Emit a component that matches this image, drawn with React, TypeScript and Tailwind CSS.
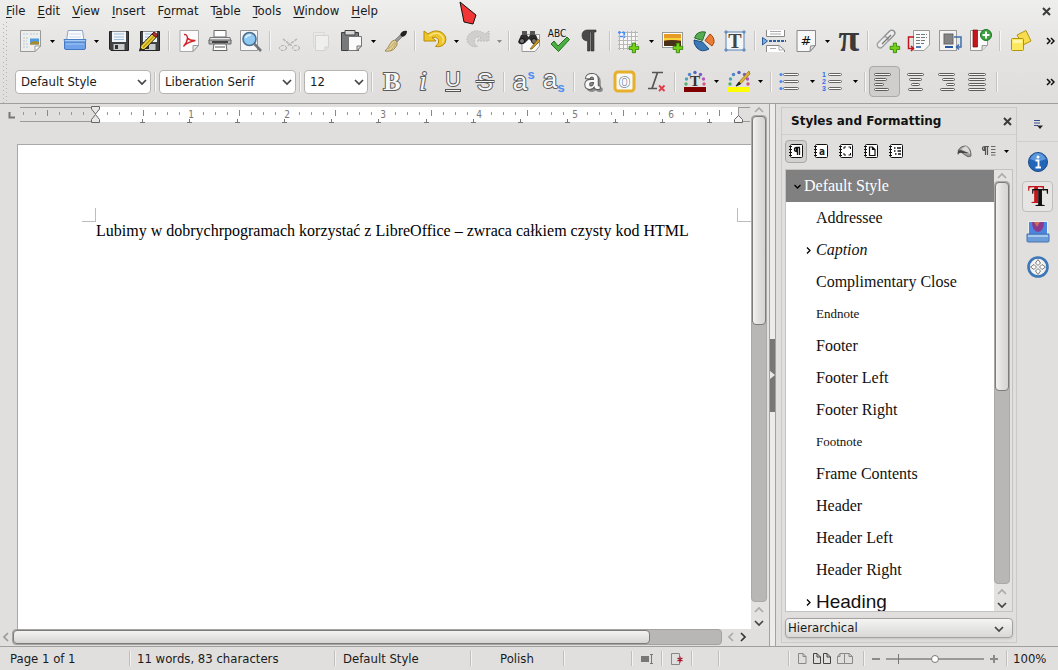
import { useState, type ReactNode } from 'react';
import clsx from 'clsx';

/* ---------- shared bits ---------- */

function Icon({ children, className }: { children: ReactNode; className?: string }) {
  return (
    <svg viewBox="0 0 24 24" className={clsx('h-6 w-6 shrink-0 overflow-visible', className)} fill="none" aria-hidden="true">
      {children}
    </svg>
  );
}

function Chevron({ dir, className = 'h-3 w-3' }: { dir: 'up' | 'down' | 'left' | 'right'; className?: string }) {
  const paths = {
    up: 'M2 8 L6 4 L10 8',
    down: 'M2 4 L6 8 L10 4',
    left: 'M8 2 L4 6 L8 10',
    right: 'M4 2 L8 6 L4 10',
  };
  return (
    <svg viewBox="0 0 12 12" className={className} fill="none" aria-hidden="true">
      <path d={paths[dir]} stroke="currentColor" strokeWidth="1.7" />
    </svg>
  );
}

function Sep() {
  return (
    <span className="flex w-2 shrink-0 justify-center">
      <span className="h-5 w-px bg-[#c6c5c4]" />
      <span className="h-5 w-px bg-[#f6f6f6]" />
    </span>
  );
}

interface ToolProps {
  label: string;
  icon: ReactNode;
  menu?: 'normal' | 'tight';
  disabled?: boolean;
  pressed?: boolean;
}

function Tool({ label, icon, menu, disabled, pressed }: ToolProps) {
  return (
    <>
      <button
        type="button"
        aria-label={label}
        aria-pressed={pressed}
        disabled={disabled}
        className={clsx(
          'flex h-[31px] w-[31px] shrink-0 items-center justify-center rounded-sm border',
          pressed ? 'border-[#aaa9a7] bg-[#cfcecd]' : 'border-transparent',
        )}
      >
        {icon}
      </button>
      {menu && (
        <button
          type="button"
          aria-label={`${label} options`}
          disabled={disabled}
          className={clsx(
            'flex h-[31px] shrink-0 items-center justify-center',
            menu === 'tight' ? 'w-3' : 'w-[13px]',
            disabled ? 'text-[#8a8a8a]' : 'text-black',
          )}
        >
          <svg viewBox="0 0 5 3" className="h-[3px] w-[5px]" aria-hidden="true">
            <path d="M0 0H5L2.5 3Z" fill="currentColor" />
          </svg>
        </button>
      )}
    </>
  );
}

function Overflow() {
  return (
    <button type="button" aria-label="More" className="ml-auto mr-[2px] flex h-6 w-3 shrink-0 items-center justify-center">
      <svg viewBox="0 0 9 8" className="h-2 w-[9px]" fill="none" aria-hidden="true">
        <path d="M1 1L4 4L1 7M5 1L8 4L5 7" stroke="#111" strokeWidth="1.5" />
      </svg>
    </button>
  );
}

function Combo({ label, value, className }: { label: string; value: string; className: string }) {
  return (
    <span className={clsx('relative shrink-0', className)}>
      <select
        aria-label={label}
        defaultValue={value}
        className="h-6 w-full appearance-none rounded border border-[#b5b4b2] bg-white px-[5px] text-[13px] leading-5 text-[#1a1a1a]"
      >
        <option>{value}</option>
      </select>
      <Chevron dir="down" className="pointer-events-none absolute right-[3px] top-[6px] h-3 w-3 text-[#444]" />
    </span>
  );
}

/* ---------- icons ---------- */

const plus = <path d="M16 12h4v4h4v4h-4v4h-4v-4h-4v-4h4z" fill="#73d216" stroke="#2f7d05" strokeWidth="1" transform="translate(4.5 4.5) scale(.8)" />;

const sheet = 'M3 1.5H21.5V16.5L16 22.5H3Z';

interface GlyphProps {
  ch: string;
  x?: number;
  y?: number;
  size?: number;
  family?: string;
  italic?: boolean;
  bold?: boolean;
}

// white letter with a grey outline, as on the character formatting buttons
function Glyph({ ch, x = 12, y = 20, size = 26, family = 'Liberation Serif', italic = false, bold = true }: GlyphProps) {
  return (
    <text
      x={x}
      y={y}
      fontSize={size}
      fontFamily={`"${family}", serif`}
      fontWeight={bold ? 700 : 400}
      fontStyle={italic ? 'italic' : 'normal'}
      textAnchor="middle"
      fill="#f8f8f8"
      stroke="#5a5a5a"
      strokeWidth="2"
      strokeLinejoin="round"
      paintOrder="stroke"
    >
      {ch}
    </text>
  );
}

const NewIcon = (
  <Icon>
    <path d="M1.5 1.5H21.5V17L16 22.5H1.5Z" fill="#eeeeec" stroke="#999" />
    <path d="M4 5H9M11 5H19M4 9H9M4 12H8M4 15H9M4 18H9" stroke="#b9c9d8" strokeDasharray="2 1" />
    <rect x="11" y="9.5" width="9" height="6" fill="#4f9be0" />
    <path d="M11 15.5V14L15 12L20 13V15.5Z" fill="#a98a2c" />
    <path d="M16 22.5V17H21.5Z" fill="#fff" stroke="#999" />
  </Icon>
);
const OpenIcon = (
  <Icon>
    <path d="M5 1.5H19.5L21 12H3.5Z" fill="#f8fbff" stroke="#8ea5c5" />
    <path d="M6 5H18M6 8H18" stroke="#cfdcec" />
    <path d="M1 10.5H23L22 14H2Z" fill="#a9cdf6" stroke="#4a80c9" />
    <path d="M1.5 13H22.5V19Q22.5 20.5 21 20.5H3Q1.5 20.5 1.5 19Z" fill="#6fa2e8" stroke="#4478c4" />
    <path d="M3 15H21" stroke="#a5c9f7" />
  </Icon>
);
const disk = (
  <>
    <path d="M2.5 2.5H21.5V21.5H4L2.5 20Z" fill="#3f4143" stroke="#222" />
    <rect x="5" y="2.5" width="14" height="10.5" fill="#f0f5fa" />
    <path d="M7 5H17M7 8H17M7 10.5H17" stroke="#9fbcd8" />
    <rect x="6.5" y="15" width="11" height="6" fill="#c9cccd" />
    <rect x="8" y="16" width="3" height="4" fill="#333" />
  </>
);
const SaveIcon = <Icon>{disk}</Icon>;
const SaveAsIcon = (
  <Icon>
    {disk}
    <path d="M1.5 22L3 16.5L15 4L19 7.5L7 20Z" fill="#edd43a" stroke="#222" />
    <path d="M5 18.5L17 6" stroke="#b59410" strokeWidth="1.2" />
    <path d="M14 5L16 3L20 6L18 8.5Z" fill="#a33" stroke="#5b1010" />
    <path d="M1.5 22L2.5 18.5L5 20.8Z" fill="#222" />
  </Icon>
);
const PdfIcon = (
  <Icon>
    <path d={sheet} fill="#fbfbfb" stroke="#aaa" />
    <path d="M7 5.5Q10 5 10.5 9Q13 12 18.5 11.5M10.5 9Q10 14 6.5 17.5M6.5 17Q12 12.5 18.5 11.5" stroke="#d2232a" strokeWidth="1.4" />
    <path d="M16 22.5V16.5H21.5Z" fill="#e8e8e8" stroke="#999" />
  </Icon>
);
const PrintIcon = (
  <Icon>
    <path d="M6 1.5H18V8H6Z" fill="#fff" stroke="#666" />
    <path d="M2 8.5H22L23 12H1Z" fill="#e8e8e8" stroke="#777" />
    <path d="M1 11H23V15H1Z" fill="#b5b5b5" stroke="#666" />
    <path d="M4 13H20" stroke="#222" strokeWidth="1.5" />
    <path d="M6 15H18L19 21.5H5Z" fill="#fff" stroke="#666" />
    <path d="M7 18H17" stroke="#555" />
  </Icon>
);
const PreviewIcon = (
  <Icon>
    <path d="M1.5 1.5H18.5V21.5H1.5Z" fill="#f7f7f7" stroke="#999" />
    <circle cx="10.5" cy="10" r="6.5" fill="#8fcaf5" stroke="#4f6f8d" strokeWidth="1.6" />
    <path d="M6.5 9Q8 5.5 12 6" stroke="#e4f4ff" strokeWidth="1.5" />
    <path d="M15.5 15L22 22" stroke="#707476" strokeWidth="2.6" />
  </Icon>
);
const CutIcon = (
  <Icon>
    <path d="M5 10L14 17M19 10L9 17" stroke="#b5b5b5" strokeWidth="1.5" strokeDasharray="3 1" />
    <ellipse cx="5" cy="19" rx="3.5" ry="2.5" stroke="#aaa" strokeDasharray="3 1" />
    <ellipse cx="18" cy="19" rx="3.5" ry="2.5" stroke="#aaa" strokeDasharray="3 1" />
  </Icon>
);
const CopyIcon = (
  <Icon>
    <path d="M4.5 3.5H15.5V17.5H4.5Z" fill="#e8e8e7" stroke="#dad9d8" />
    <path d="M6.5 6.5H19.5V18L16 21.5H6.5Z" fill="#efefee" stroke="#d3d2d1" />
    <path d="M16 21V18H19" stroke="#cecdcc" />
  </Icon>
);
const PasteIcon = (
  <Icon>
    <path d="M1.5 3.5H18.5V21.5H1.5Z" fill="#77797a" stroke="#3c3e3f" />
    <path d="M5 1.5H15V6H5Z" fill="#d8d8d8" stroke="#444" />
    <path d="M8.5 7.5H21.5V17L17 21.5H8.5Z" fill="#fafafa" stroke="#777" />
    <path d="M17 21.5V17H21.5Z" fill="#ddd" stroke="#777" />
  </Icon>
);
const BrushIcon = (
  <Icon>
    <path d="M23 2Q18 1 16 6L18 8Q23 7 23 2Z" fill="#222" />
    <path d="M16 6L11 11L13 13L18 8Z" fill="#999" stroke="#666" strokeWidth=".6" />
    <path d="M11 11Q8 11 6 15Q4 19 1 22Q8 23 11 19Q14 16 13 13Z" fill="#e3cf94" stroke="#8d7a44" strokeWidth=".8" />
    <path d="M4 20Q8 18 11 13M7 21Q10 19 12 14" stroke="#aa955a" strokeWidth=".7" />
  </Icon>
);
const undoPath = 'M1 2L5 5Q12 0 18 3Q25 7 22 14Q19 18.5 12.5 17.5Q17 14 15.5 10.5Q13 7 9 8.5L13 12H1Z';
const UndoIcon = (
  <Icon>
    <path d={undoPath} fill="#edc52b" stroke="#b98c07" strokeLinejoin="round" />
    <path d="M6 7Q13 2 18 6Q22 10 19 14" stroke="#fbe88b" strokeWidth="1.2" />
  </Icon>
);
const RedoIcon = (
  <Icon>
    <path d={undoPath} fill="#d0cfce" stroke="#bcbbba" strokeDasharray="2 1" transform="translate(24 0) scale(-1 1)" />
  </Icon>
);
const FindIcon = (
  <Icon>
    <path d="M5 5.5H22.5V17L18 22.5H5Z" fill="#f9f9f9" stroke="#999" />
    <path d="M5 2H10V6H5ZM13 2H18V6H13Z" fill="#555" />
    <path d="M4 6H10L11.5 8L13 6H19L22 13Q20 17 16 14L12 10L8 14Q3 17 1 13Z" fill="#2e2e2e" />
    <circle cx="5" cy="12" r="2.5" fill="#777" stroke="#111" />
    <circle cx="17" cy="12" r="2.5" fill="#777" stroke="#111" />
    <path d="M13 20L21 10L23 12L15 20Z" fill="#c59a2b" stroke="#7b5c10" strokeWidth=".7" />
  </Icon>
);
const SpellIcon = (
  <Icon>
    <text x="9" y="8" textAnchor="middle" fontSize="10" fontFamily='"DejaVu Sans Condensed", "DejaVu Sans", sans-serif' fill="#111">ABC</text>
    <path d="M3 15L6 12L10 17L19 8L21.5 10.5L10.5 22.5Z" fill="#4caf42" stroke="#23701d" />
  </Icon>
);
const PilcrowIcon = (
  <Icon>
    <path d="M17 1H8Q3 1.5 3 6.5Q3 11.5 8.500 12V22H11V3H12V22H15V3H17Z" fill="#4a4a4a" stroke="#2b2b2b" strokeWidth=".6" />
  </Icon>
);
const TableIcon = (
  <Icon>
    <path d="M1 3.5H19.5V20.5H1Z" fill="#f8f8f8" />
    <path d="M0 3.5H20M0 7.5H20M0 11.5H20M0 15.5H20M0 19.5H20M1.5 2V21M5.5 2V21M9.5 2V21M13.5 2V21M17.5 2V21" stroke="#b7b7b7" />
    <path d="M0 3.5H7M2 7.5H6M6.5 3.5V9M1.5 2V6" stroke="#4e8ef0" strokeWidth="1.3" strokeDasharray="3 1" />
    <g transform="translate(-3 0)">{plus}</g>
  </Icon>
);
const ImageIcon = (
  <Icon>
    <rect x=".5" y="3.5" width="20" height="15" fill="#fff" stroke="#999" />
    <rect x="2" y="5" width="17" height="12" fill="#e79a24" />
    <path d="M2 9H19V11H2Z" fill="#fbd23b" />
    <path d="M2 12Q9 10 19 12V17H2Z" fill="#4a3018" />
    <g transform="translate(-3 0)">{plus}</g>
  </Icon>
);
const ChartIcon = (
  <Icon>
    <path d="M9.5 11.5L1.5 9Q4 1.5 12.5 3Z" fill="#56ad51" stroke="#276d2a" />
    <path d="M12 11.5L17 5Q21.5 8 21 13.5L19 17Z" fill="#ec7b34" stroke="#9e4710" />
    <path d="M9.5 13L16 20Q9 24 4 19Q.5 15 1 11Z" fill="#3b78b5" stroke="#1f4c7d" />
  </Icon>
);
const TextBoxIcon = (
  <Icon>
    <rect x="2" y="3" width="18" height="18" fill="#f5f5f5" stroke="#5484b8" />
    <path d="M0 3H4M2 1V5M18 3H22M20 1V5M0 21H4M2 19V23M18 21H22M20 19V23" stroke="#5484b8" />
    <text x="11" y="19" textAnchor="middle" fontSize="20" fontWeight="700" fontFamily='"Liberation Serif", serif' fill="#444">T</text>
  </Icon>
);
const BreakIcon = (
  <Icon>
    <path d="M3.5 1V7.5H21.5V1" fill="#fff" stroke="#888" />
    <path d="M7 2.5H18M7 5H18" stroke="#aaa" />
    <path d="M-.5 8.5V16L4.5 12Z" fill="#79aee3" stroke="#2f5f96" />
    <path d="M6 12H23" stroke="#2b62a3" strokeWidth="2" strokeDasharray="3 1" />
    <path d="M3.5 23V16.5H16L21.5 21V23" fill="#fff" stroke="#888" />
    <path d="M7 19.5H13M16 17V21H21" stroke="#aaa" />
  </Icon>
);
const FieldIcon = (
  <Icon>
    <path d={sheet} fill="#f8f8f8" stroke="#888" />
    <text x="12" y="16" textAnchor="middle" fontSize="13" fontFamily='"DejaVu Sans", sans-serif' fill="#111">#</text>
    <path d="M16 22.5L16.5 17L21.5 16.5Z" fill="#ddd" stroke="#888" />
  </Icon>
);
const PiIcon = (
  <Icon>
    <text x="12" y="22" textAnchor="middle" fontSize="38" fontWeight="700" fontFamily='"Liberation Serif", serif' fill="#3a3a3a">π</text>
  </Icon>
);
const LinkIcon = (
  <Icon>
    <rect x="10" y="0" width="6" height="13" rx="3" transform="rotate(45 13 7)" stroke="#8a8d8f" strokeWidth="1.3" fill="#eee" />
    <rect x="4" y="7" width="6" height="13" rx="3" transform="rotate(45 7 13)" stroke="#9da0a2" strokeWidth="1.3" fill="#eee" />
    <path d="M6 15L15 6" stroke="#777" strokeWidth="1.3" />
    {plus}
  </Icon>
);
const XrefIcon = (
  <Icon>
    <path d="M6.5 1.5H22.5V16L17 21.5H6.5Z" fill="#fafafa" stroke="#999" />
    <path d="M9 5.5H20M9 8.5H20M9 11.5H19M9 14.5H17" stroke="#777" strokeDasharray="4 1" />
    <path d="M9 18H14" stroke="#2d5c9e" strokeWidth="1.6" />
    <path d="M7 8H1.5V19.5H6M4 17L6.5 19.5L4 22" stroke="#c3161c" strokeWidth="1.5" />
  </Icon>
);
const CaptionIcon = (
  <Icon>
    <rect x="1.5" y="1.5" width="17" height="20" fill="#f3f3f3" stroke="#999" />
    <rect x="6" y="5" width="9" height="10" fill="#858585" stroke="#666" />
    <path d="M7 18H15" stroke="#2556a0" strokeWidth="2" />
    <path d="M16 8H23V18H19M21 15.5L18.5 18L21 20.5" stroke="#3c6fae" strokeWidth="1.5" />
  </Icon>
);
const BookmarkIcon = (
  <Icon>
    <path d="M1.5 1.5H18.5V16L13 21.5H1.5Z" fill="#fafafa" stroke="#999" />
    <path d="M4 1H8.5V18H4Z" fill="#c4161c" stroke="#7c0b10" strokeWidth=".7" />
    <path d="M13 21.5V16.5H18" fill="#ddd" stroke="#999" />
    <circle cx="17" cy="6" r="5.5" fill="#3aa53f" stroke="#1f7424" />
    <path d="M17 2.5V9.5M13.5 6H20.5" stroke="#fff" strokeWidth="2" />
  </Icon>
);
const ShapesIcon = (
  <Icon>
    <path d="M9 6L18 1.5L23 12L15 16Z" fill="#f6dc4e" stroke="#b3940f" />
    <rect x="3.5" y="9.5" width="12" height="12" rx="1" fill="#fbe85e" stroke="#b3940f" />
    <path d="M5 11H14V14H5Z" fill="#fff6a8" />
  </Icon>
);

const StrikeIcon = (
  <Icon>
    <Glyph ch="S" size={24} family="Liberation Sans" bold={false} />
    <rect x="3" y="10.5" width="18" height="2" fill="#f4f4f4" stroke="#555" />
  </Icon>
);
const UnderlineIcon = (
  <Icon>
    <Glyph ch="U" x={11} size={21} y={16} family="Liberation Sans" bold={false} />
    <rect x="3.5" y="19.5" width="15" height="2" fill="#f4f4f4" stroke="#555" />
  </Icon>
);
const SuperIcon = (
  <Icon>
    <Glyph ch="a" x={8} size={26} family="Liberation Sans" bold={false} />
    <text x="19" y="9" textAnchor="middle" fontSize="13" fontWeight="700" fontFamily='"Liberation Sans", sans-serif' fill="#4b8df2">s</text>
  </Icon>
);
const SubIcon = (
  <Icon>
    <Glyph ch="a" x={7} y={18} size={26} family="Liberation Sans" bold={false} />
    <text x="18" y="22" textAnchor="middle" fontSize="13" fontWeight="700" fontFamily='"Liberation Sans", sans-serif' fill="#4b8df2">s</text>
  </Icon>
);
const ShadowIcon = (
  <Icon className="drop-shadow-[2px_2px_0_#8a8a8a]">
    <Glyph ch="a" x={10} y={19} size={27} family="Liberation Sans" />
  </Icon>
);
const OutlineIcon = (
  <Icon>
    <rect x="2" y="2" width="19" height="19" rx="3" fill="#f8f8f8" stroke="#e6b02a" strokeWidth="3" />
    <text x="11.5" y="17" textAnchor="middle" fontSize="22" fontFamily='"Liberation Serif", serif' fill="#fff" stroke="#789" strokeWidth="1.4" paintOrder="stroke">o</text>
  </Icon>
);
const ClearIcon = (
  <Icon>
    <path d="M8 2.5H19M13.5 2.5L8 18.5M4 18.5H13" stroke="#555" strokeWidth="1.7" />
    <path d="M15 15.5L20.5 21M20.5 15.5L15 21" stroke="#e23a46" strokeWidth="1.8" />
  </Icon>
);
const dots = (
  <>
    <circle cx="3" cy="14" r="1.7" fill="#55b06d" />
    <circle cx="3.5" cy="9" r="1.7" fill="#4ba3b8" />
    <circle cx="6.5" cy="4.5" r="1.7" fill="#4a86c8" />
    <circle cx="12" cy="2.5" r="1.7" fill="#5165c0" />
    <circle cx="17.5" cy="4.5" r="1.7" fill="#7f58c0" />
    <circle cx="20.5" cy="9" r="1.7" fill="#b456b8" />
    <circle cx="21" cy="14" r="1.7" fill="#cf5a83" />
  </>
);
const FontColorIcon = (
  <Icon>
    {dots}
    <text x="12" y="16" textAnchor="middle" fontSize="15" fontWeight="700" fontFamily='"Liberation Serif", serif' fill="#333">T</text>
    <rect x="1" y="17" width="22" height="5" fill="#800000" />
  </Icon>
);
const HighlightIcon = (
  <Icon>
    {dots}
    <path d="M22 1L12 12L13.5 14L23 4Z" fill="#dfb634" stroke="#8b6d10" strokeWidth=".7" />
    <path d="M12 12L9 16L13.5 14Z" fill="#222" stroke="#222" />
    <rect x="1" y="17" width="22" height="5" fill="#ffff00" />
  </Icon>
);
const BulletIcon = (
  <Icon>
    {[4, 11, 18].map((y) => (
      <g key={y}>
        <circle cx="2" cy={y + 0.5} r="1.6" fill="#4b8af0" />
        <rect x="4.5" y={y - 0.5} width="15" height="2" rx="1" fill="#fff" stroke="#666" />
      </g>
    ))}
  </Icon>
);
const NumberIcon = (
  <Icon>
    {[4, 11, 18].map((y, i) => (
      <g key={y}>
        <text x="2" y={y + 3} textAnchor="middle" fontSize="7" fontWeight="700" fontFamily='"Liberation Sans", sans-serif' fill="#2f6fe4">
          {i + 1}
        </text>
        <rect x="6.5" y={y - 0.5} width="13" height="2" rx="1" fill="#fff" stroke="#666" />
      </g>
    ))}
  </Icon>
);

function AlignIcon({ rows }: { rows: [number, number][] }) {
  return (
    <Icon>
      {rows.map(([x, w], i) => (
        <rect key={i} x={x - 1.5} y={3.5 + i * 5} width={w} height="2" rx="1" fill="#f4f4f4" stroke="#5c5c5c" />
      ))}
    </Icon>
  );
}

const alignments: { label: string; rows: [number, number][] }[] = [
  { label: 'Align Left', rows: [[3, 16], [3, 12], [3, 9], [3, 14]] },
  { label: 'Center', rows: [[5, 16], [7, 12], [9, 8], [6, 14]] },
  { label: 'Align Right', rows: [[5, 16], [9, 12], [13, 8], [7, 14]] },
  { label: 'Justified', rows: [[4, 17], [4, 17], [4, 17], [4, 17]] },
];

/* ---------- menu and toolbars ---------- */

// [before, accelerator, after]
const menus = [
  ['', 'F', 'ile'],
  ['', 'E', 'dit'],
  ['', 'V', 'iew'],
  ['', 'I', 'nsert'],
  ['F', 'o', 'rmat'],
  ['T', 'a', 'ble'],
  ['', 'T', 'ools'],
  ['', 'W', 'indow'],
  ['', 'H', 'elp'],
];

function CloseX() {
  return (
    <svg viewBox="0 0 9 9" className="h-[9px] w-[9px]" fill="none" aria-hidden="true">
      <path d="M1 1L8 8M8 1L1 8" stroke="#3b3b3b" strokeWidth="2" />
    </svg>
  );
}

function MenuBar() {
  return (
    <nav className="flex h-[22px] shrink-0 items-center">
      {menus.map(([before, key, after]) => (
        <button key={key + after} type="button" className="px-[6px] text-[13px] leading-5">
          {before}
          <span className="underline underline-offset-2">{key}</span>
          {after}
        </button>
      ))}
      <button type="button" aria-label="Close document" className="ml-auto mr-[6px] p-px">
        <CloseX />
      </button>
    </nav>
  );
}

// dotted drag handle at the left end of a toolbar
function Grip() {
  return (
    <svg className="ml-[3px] mr-[7px] h-full w-[5px] shrink-0" aria-hidden="true">
      {Array.from({ length: 11 }, (_, i) => (
        <g key={i} fill="#b3b2b0">
          <rect x="0" y={i * 4 + 2} width="1" height="1" />
          <rect x="3" y={i * 4} width="1" height="1" />
        </g>
      ))}
    </svg>
  );
}

function StandardBar() {
  return (
    <div role="toolbar" aria-label="Standard" className="flex h-[38px] shrink-0 items-center">
      <Grip />
      <Tool label="New" icon={NewIcon} menu="normal" />
      <Tool label="Open" icon={OpenIcon} menu="normal" />
      <Tool label="Save" icon={SaveIcon} />
      <Tool label="Save As" icon={SaveAsIcon} />
      <Sep />
      <Tool label="Export as PDF" icon={PdfIcon} />
      <Tool label="Print" icon={PrintIcon} />
      <Tool label="Print Preview" icon={PreviewIcon} />
      <Sep />
      <Tool label="Cut" icon={CutIcon} disabled />
      <Tool label="Copy" icon={CopyIcon} disabled />
      <Tool label="Paste" icon={PasteIcon} menu="normal" />
      <Tool label="Clone Formatting" icon={BrushIcon} />
      <Sep />
      <Tool label="Undo" icon={UndoIcon} menu="tight" />
      <Tool label="Redo" icon={RedoIcon} menu="tight" disabled />
      <Sep />
      <Tool label="Find and Replace" icon={FindIcon} />
      <Tool label="Spelling" icon={SpellIcon} />
      <Tool label="Formatting Marks" icon={PilcrowIcon} />
      <Sep />
      <Tool label="Table" icon={TableIcon} menu="normal" />
      <Tool label="Image" icon={ImageIcon} />
      <Tool label="Chart" icon={ChartIcon} />
      <Tool label="Text Box" icon={TextBoxIcon} />
      <Sep />
      <Tool label="Page Break" icon={BreakIcon} />
      <Tool label="Field" icon={FieldIcon} menu="tight" />
      <Tool label="Special Character" icon={PiIcon} />
      <Sep />
      <Tool label="Hyperlink" icon={LinkIcon} />
      <Tool label="Cross-reference" icon={XrefIcon} />
      <Tool label="Caption" icon={CaptionIcon} />
      <Tool label="Bookmark" icon={BookmarkIcon} />
      <Sep />
      <Tool label="Shapes" icon={ShapesIcon} />
      <Overflow />
    </div>
  );
}

function FormattingBar() {
  const [align, setAlign] = useState('Align Left');
  return (
    <div role="toolbar" aria-label="Formatting" className="flex h-[43px] shrink-0 items-center">
      <Grip />
      <Combo label="Paragraph style" value="Default Style" className="w-[136px]" />
      <Sep />
      <Combo label="Font name" value="Liberation Serif" className="w-[137px]" />
      <Sep />
      <Combo label="Font size" value="12" className="w-16" />
      <Sep />
      <Tool label="Bold" icon={<Icon><Glyph ch="B" /></Icon>} />
      <Tool label="Italic" icon={<Icon><Glyph ch="i" italic bold={false} size={28} /></Icon>} />
      <Tool label="Underline" icon={UnderlineIcon} />
      <Tool label="Strikethrough" icon={StrikeIcon} />
      <Sep />
      <Tool label="Superscript" icon={SuperIcon} />
      <Tool label="Subscript" icon={SubIcon} />
      <Sep />
      <Tool label="Shadow" icon={ShadowIcon} />
      <Tool label="Outline" icon={OutlineIcon} />
      <Tool label="Clear Formatting" icon={ClearIcon} />
      <Sep />
      <Tool label="Font Color" icon={FontColorIcon} menu="normal" />
      <Tool label="Highlighting" icon={HighlightIcon} menu="normal" />
      <Sep />
      <Tool label="Bullets" icon={BulletIcon} menu="tight" />
      <Tool label="Numbering" icon={NumberIcon} menu="tight" />
      <Sep />
      {alignments.map((a) => (
        <span key={a.label} className="contents" onClick={() => setAlign(a.label)}>
          <Tool label={a.label} icon={<AlignIcon rows={a.rows} />} pressed={align === a.label} />
        </span>
      ))}
      <Sep />
      <Overflow />
    </div>
  );
}

/* ---------- document ---------- */

function Ruler() {
  const ticks = Array.from({ length: 60 }, (_, i) => i - 6).filter((i) => i !== 0 && 96 + i * 12 < 748);
  return (
    <svg className="h-[22px] w-full shrink-0" fill="none" aria-hidden="true">
      <path d="M9.5 8V13.5H15" stroke="#777" strokeWidth="2" />
      <path d="M20 3.5H96M20 17.5H96" stroke="#9b9a99" />
      <rect x="96" y="3" width="642" height="15" fill="#fff" />
      {ticks.map((i) => {
        const x = 95.5 + i * 12;
        if (i > 0 && i % 8 === 0) {
          return (
            <text key={i} x={x - 0.5} y="14" textAnchor="middle" fontSize="10" fontFamily='"DejaVu Sans Condensed", "DejaVu Sans", sans-serif' fill="#777">
              {i / 8}
            </text>
          );
        }
        return i % 4 === 0 ? (
          <path key={i} d={`M${x} 6V12`} stroke="#888" />
        ) : (
          <path key={i} d={`M${x} 8V11`} stroke="#999" />
        );
      })}
      {Array.from({ length: 13 }, (_, i) => Math.round(142 + i * 47.25)).map((x) => (
        <path key={x} d={`M${x - 2} 18.5H${x + 3}M${x + 0.5} 15V18`} stroke="#777" />
      ))}
      <path d="M91.5 2.5H99.5V5L95.5 10L91.5 5ZM91.5 18.5H99.5V15.5L95.5 10.5L91.5 15.5Z" fill="#e8e8e8" stroke="#666" />
      <path d="M738.5 3V18M738 3.5H750M738 17.5H750" stroke="#9b9a99" />
      <path d="M734.5 18.5H742.5V15.5L738.5 11.5L734.5 15.5Z" fill="#f4f4f4" stroke="#666" />
    </svg>
  );
}

function VScroll({ thumb }: { thumb: string }) {
  return (
    <div className="flex w-[18px] shrink-0 flex-col bg-[#e3e2e1]">
      <button type="button" aria-label="Scroll up" className="flex h-[11px] w-4 items-center justify-center text-[#aaa]">
        <Chevron dir="up" />
      </button>
      <div className="min-h-0 w-4 flex-1 rounded border border-[#aaa9a7] bg-[#b8b7b5]">
        <div
          className={clsx(
            'w-full rounded border border-[#7d7c7a] bg-gradient-to-r from-[#f1f1f0] via-[#e0dfde] to-[#d5d4d3]',
            thumb,
          )}
        />
      </div>
      <button type="button" aria-label="Page up" className="mt-[2px] flex h-3 w-4 items-center justify-center text-[#aaa]">
        <Chevron dir="up" />
      </button>
      <button type="button" aria-label="Scroll down" className="flex h-[13px] w-4 items-center justify-center text-[#444]">
        <Chevron dir="down" />
      </button>
    </div>
  );
}

function HScroll() {
  return (
    <div className="flex h-[17px] shrink-0 items-start">
      <button type="button" aria-label="Scroll left" className="flex h-4 w-3 items-center text-[#999]">
        <Chevron dir="left" />
      </button>
      <div className="h-4 flex-1 rounded border border-[#a3a2a0] bg-[#b8b7b5]">
        <div className="h-[14px] w-[90%] rounded border border-[#7d7c7a] bg-gradient-to-b from-[#f3f3f2] to-[#d6d5d4]" />
      </div>
      <button type="button" aria-label="Page left" className="ml-[3px] flex h-4 w-3 items-center text-[#aaa]">
        <Chevron dir="left" />
      </button>
      <button type="button" aria-label="Scroll right" className="mr-5 flex h-4 w-3 items-center text-[#333]">
        <Chevron dir="right" />
      </button>
    </div>
  );
}

function Document() {
  return (
    <div className="flex min-w-0 flex-1 flex-col">
      <div className="flex min-h-0 flex-1">
        <div className="flex min-w-0 flex-1 flex-col">
          <Ruler />
          <div className="mt-[18px] flex min-h-0 flex-1 pl-[17px]">
            <div className="flex-1 border-l border-t border-[#a9a8a7] bg-white pt-[63px]">
              <div className="flex justify-between pl-[64px]">
                <span className="h-[14px] w-[14px] border-b border-r border-[#bdbdbd]" />
                <span className="h-[14px] w-[14px] border-b border-l border-[#bdbdbd]" />
              </div>
              <p className="whitespace-nowrap pl-[78px] font-['Liberation_Serif',serif] text-base leading-[18px] text-black">
                Lubimy w dobrychrpogramach korzystać z LibreOffice – zwraca całkiem czysty kod HTML
              </p>
            </div>
          </div>
        </div>
        <VScroll thumb="h-[43%]" />
      </div>
      <HScroll />
    </div>
  );
}

/* ---------- sidebar ---------- */

function Book({ children }: { children: ReactNode }) {
  return (
    <svg viewBox="0 0 16 16" className="h-4 w-4 overflow-visible" fill="none" aria-hidden="true">
      <rect x="2.5" y="1.5" width="12" height="13" rx="1" fill="#fff" stroke="#111" />
      <path d="M1 3.5H4M1 6.5H4M1 9.5H4M1 12.5H4" stroke="#111" />
      {children}
    </svg>
  );
}

const styleKinds = [
  { label: 'Paragraph Styles', art: <path d="M12 4.5H8.5Q6.5 4.5 6.5 6.5T9 8.5M9.5 4.5V12M11.5 4.5V12M8.5 5V8" stroke="#111" strokeWidth="1.3" /> },
  { label: 'Character Styles', art: <text x="9" y="12" textAnchor="middle" fontSize="10" fontWeight="700" fontFamily='"DejaVu Sans Condensed", "DejaVu Sans", sans-serif' fill="#222">a</text> },
  { label: 'Frame Styles', art: <path d="M6 6V4H8M10.5 4H12.5V6M12.5 10V12H10.5M8 12H6V10" stroke="#111" /> },
  { label: 'Page Styles', art: <path d="M6.5 4H9.5L12 6.5V12.5H6.5ZM9.5 4V6.5H12" stroke="#111" strokeWidth="1.2" /> },
  { label: 'List Styles', art: <path d="M6 5H7.5M9 5H13M6 8H7.5M9.5 8H13M7 11H8.5M10 11H13" stroke="#111" strokeWidth="1.3" /> },
];

interface StyleRow {
  name: string;
  look?: string;
  children?: boolean;
}

const styles: StyleRow[] = [
  { name: 'Addressee' },
  { name: 'Caption', look: 'italic', children: true },
  { name: 'Complimentary Close' },
  { name: 'Endnote', look: 'text-[13px]' },
  { name: 'Footer' },
  { name: 'Footer Left' },
  { name: 'Footer Right' },
  { name: 'Footnote', look: 'text-[13px]' },
  { name: 'Frame Contents' },
  { name: 'Header' },
  { name: 'Header Left' },
  { name: 'Header Right' },
  { name: 'Heading', look: "font-['Liberation_Sans',sans-serif] text-[19px]", children: true },
];

function StylesPanel() {
  const [kind, setKind] = useState('Paragraph Styles');
  return (
    <section className="mb-[3px] ml-[5px] mt-[3px] flex w-[236px] shrink-0 flex-col border border-[#cbcac9]">
      <header className="flex h-[27px] shrink-0 items-center justify-between border-b border-[#cfcecd] pl-[9px] pr-1">
        <h2 className="font-['DejaVu_Sans',sans-serif] text-xs font-bold text-[#111]">Styles and Formatting</h2>
        <button type="button" aria-label="Close sidebar">
          <CloseX />
        </button>
      </header>
      <div className="flex h-[34px] shrink-0 items-center gap-[3px] pb-[2px] pl-[3px]">
        {styleKinds.map((k) => (
          <button
            key={k.label}
            type="button"
            aria-label={k.label}
            onClick={() => setKind(k.label)}
            className={clsx(
              'flex h-[23px] w-[22px] items-center justify-center rounded-sm border',
              kind === k.label ? 'border-[#a9a8a6] bg-[#d2d1d0]' : 'border-transparent',
            )}
          >
            <Book>{k.art}</Book>
          </button>
        ))}
        <button type="button" aria-label="Fill Format Mode" className="ml-auto">
          <svg viewBox="0 0 16 16" className="h-4 w-4" fill="none" aria-hidden="true">
            <path d="M2 8Q4 3 10 3Q15 5 15 13Q12 15 9 12L5 9Z" fill="#9c9c9c" stroke="#666" />
            <path d="M5 6L10 3Q14 6 14 11Z" fill="#dadada" />
            <path d="M2 8Q1 10 2 12Q3 9 6 10L13 10L4 7Z" fill="#444" />
          </svg>
        </button>
        <button type="button" aria-label="New Style from Selection" className="ml-[6px]">
          <svg viewBox="0 0 16 16" className="h-4 w-4" fill="none" aria-hidden="true">
            <path d="M8 3.5H4Q1.5 3.5 1.5 5.5T4 7.5M4.5 3.5V12M6.5 3.5V12M3.5 4V7" stroke="#555" strokeWidth="1.2" />
            <path d="M10 3.5H14.5M10 6.5H14.5M10 9.5H14.5M10 12H14.5" stroke="#666" />
          </svg>
        </button>
        <button type="button" aria-label="Style actions" className="ml-[4px] mr-[7px]">
          <svg viewBox="0 0 5 3" className="h-[3px] w-[5px]" aria-hidden="true">
            <path d="M0 0H5L2.5 3Z" fill="#000" />
          </svg>
        </button>
      </div>
      <div className="mx-[3px] flex min-h-0 flex-1 border border-[#c4c3c2] bg-white">
        <ul className="min-w-0 flex-1 overflow-hidden font-['Liberation_Serif',serif] text-base text-[#111]">
          <li>
            <button type="button" className="flex h-8 w-full items-center bg-[#808080] pl-[7px] text-white">
              <Chevron dir="down" className="mr-[2px] h-[9px] w-[9px] text-black" />
              Default Style
            </button>
          </li>
          {styles.map((s) => (
            <li key={s.name}>
              <button type="button" className="flex h-8 w-full items-center pl-[18px]">
                <span className="w-3 shrink-0">
                  {s.children && <Chevron dir="right" className="h-[9px] w-[9px] text-black" />}
                </span>
                <span className={s.look}>{s.name}</span>
              </button>
            </li>
          ))}
        </ul>
        <VScroll thumb="h-[52%]" />
      </div>
      <div className="relative mx-[3px] mb-[4px] mt-[6px] shrink-0">
        <select
          aria-label="Style filter"
          defaultValue="Hierarchical"
          className="h-5 w-full appearance-none rounded border border-[#a3a2a0] bg-gradient-to-b from-[#f4f4f3] to-[#d9d8d7] px-[2px] text-[13px] leading-[18px] text-[#1a1a1a] shadow-sm"
        >
          <option>Hierarchical</option>
        </select>
        <Chevron dir="down" className="pointer-events-none absolute right-2 top-[5px] h-3 w-3 text-[#444]" />
      </div>
    </section>
  );
}

const decks = [
  {
    label: 'Properties',
    art: (
      <Icon>
        <circle cx="12" cy="12" r="9.5" fill="#2366b8" stroke="#1b4a8a" />
        <path d="M4 9Q7 3 12 3T20 9Q12 13 4 9Z" fill="#5d98dc" />
        <rect x="10.5" y="5.5" width="3" height="3" rx="1.5" fill="#fff" />
        <path d="M9.5 10.5H12.5V17M9.5 17.5H15" stroke="#fff" strokeWidth="1.8" />
      </Icon>
    ),
  },
  {
    label: 'Styles and Formatting',
    art: (
      <Icon className="drop-shadow-[-4px_-3px_0_#c4161c]">
        <text x="14" y="21" textAnchor="middle" fontSize="25" fontWeight="700" fontFamily='"Liberation Serif", serif' fill="#111">T</text>
      </Icon>
    ),
  },
  {
    label: 'Gallery',
    art: (
      <Icon>
        <rect x="2.5" y="1.5" width="19" height="13" fill="#4a86e0" stroke="#eee" />
        <path d="M6 2H18Q18 11 12 12Q6 11 6 2Z" fill="#8c3b8c" />
        <path d="M8 2H14L11 7Z" fill="#c9705f" />
        <path d="M1 14H23V21Q23 22 22 22H2Q1 22 1 21Z" fill="#6d9dd8" stroke="#4674b0" />
        <path d="M2 16H22" stroke="#a7c8ee" strokeWidth="2" />
      </Icon>
    ),
  },
  {
    label: 'Navigator',
    art: (
      <Icon>
        <circle cx="12" cy="12" r="9.5" fill="#f3f3f2" stroke="#3e77b8" strokeWidth="2.6" />
        <path d="M12 4.5L14.5 8L12 10.5L9.5 8ZM12 13.5L14.5 16L12 19.5L9.5 16ZM4.5 12L8 9.5L10.5 12L8 14.5ZM13.5 12L16 9.5L19.5 12L16 14.5Z" fill="#fff" stroke="#777" />
      </Icon>
    ),
  },
];

function DeckTabs() {
  return (
    <aside className="flex w-[41px] shrink-0 flex-col items-center">
      <button type="button" aria-label="Sidebar settings" className="mt-[3px] flex h-[35px] w-full items-center justify-center border-b border-[#cfcecd]">
        <svg viewBox="0 0 10 10" className="h-[10px] w-[10px]" fill="none" aria-hidden="true">
          <path d="M1 1.5H7M1 4H7M1 6.5H5" stroke="#34508a" />
          <path d="M4 6.5H10L7 10Z" fill="#222" />
        </svg>
      </button>
      <div className="mt-1 flex flex-col gap-1">
        {decks.map((d, i) => (
          <button
            key={d.label}
            type="button"
            aria-label={d.label}
            className={clsx(
              'flex h-[31px] w-[31px] items-center justify-center rounded-sm border',
              i === 1 ? 'border-[#bfbebd] bg-[#e6e5e4]' : 'border-transparent',
            )}
          >
            {d.art}
          </button>
        ))}
      </div>
    </aside>
  );
}

/* ---------- status bar ---------- */

function Cell({ className, children }: { className: string; children?: ReactNode }) {
  return (
    <div className={clsx('flex h-full items-center border-r border-[#bfbebd] shadow-[1px_0_0_#f2f2f2]', className)}>
      {children}
    </div>
  );
}

function StatusBar() {
  const [zoom, setZoom] = useState(50);
  return (
    <footer className="flex h-6 shrink-0 items-center border-t border-[#a09f9e] py-1">
      <Cell className="w-[130px] shrink-0 pl-[10px]">Page 1 of 1</Cell>
      <Cell className="w-[205px] shrink-0 pl-[7px]">11 words, 83 characters</Cell>
      <Cell className="w-[136px] shrink-0 pl-2">Default Style</Cell>
      <Cell className="w-[93px] shrink-0 justify-center">Polish</Cell>
      <Cell className="w-[68px] shrink-0" />
      <Cell className="w-[30px] shrink-0 justify-center">
        <svg viewBox="0 0 12 10" className="h-[10px] w-3" fill="none" aria-label="Insert mode">
          <rect y="2" width="8" height="6" fill="#777" />
          <path d="M9 .5H12M9 9.5H12M10.5 1V9" stroke="#777" />
        </svg>
      </Cell>
      <Cell className="w-[30px] shrink-0 justify-center">
        <svg viewBox="0 0 12 12" className="h-3 w-3" fill="none" aria-label="Document modified">
          <path d="M8.5 4V.5H.5V11.5H8.5V9" stroke="#888" />
          <path d="M9 3.5V9.5M6.5 5L11.5 8M11.5 5L6.5 8" stroke="#a3142a" strokeWidth="1.3" />
        </svg>
      </Cell>
      <Cell className="w-[27px] shrink-0" />
      <Cell className="min-w-0 flex-1" />
      <Cell className="w-[75px] shrink-0 justify-center">
        <svg viewBox="0 0 56 11" className="h-[11px] w-14" fill="none" aria-label="View layout">
          <path d="M.5.5H5L8 3.5V10.5H.5ZM5 .5V3.5H8" stroke="#888" />
          <path d="M15.5.5H19L22.5 4V10.5H15.5ZM19 .5V4H22.5M25.5.5H29L32.5 4V10.5H25.5ZM29 .5V4H32.5" stroke="#444" />
          <path d="M46.5.5H42L39.5 3.5V10.5H46.5ZM42 .5V3.5H39.5M46.5.5H51L54.5 3.5V10.5H46.5M51 .5V3.5H54.5" stroke="#888" />
        </svg>
      </Cell>
      <Cell className="w-[143px] shrink-0 px-2">
        <button type="button" aria-label="Zoom out" className="w-2 shrink-0">
          <span className="block h-0.5 bg-[#8a8a8a]" />
        </button>
        <span className="relative mx-[6px] flex min-w-0 flex-1 items-center">
          <input
            type="range"
            aria-label="Zoom"
            value={zoom}
            onChange={(e) => setZoom(Number(e.target.value))}
            className="h-3 w-full appearance-none bg-transparent [&::-webkit-slider-runnable-track]:h-0.5 [&::-webkit-slider-runnable-track]:bg-[#999] [&::-webkit-slider-thumb]:-mt-[3px] [&::-webkit-slider-thumb]:h-2 [&::-webkit-slider-thumb]:w-2 [&::-webkit-slider-thumb]:appearance-none [&::-webkit-slider-thumb]:rounded-full [&::-webkit-slider-thumb]:border [&::-webkit-slider-thumb]:border-[#777] [&::-webkit-slider-thumb]:bg-white"
          />
          <span className="pointer-events-none absolute left-3 h-[10px] w-px bg-[#777]" />
        </span>
        <button type="button" aria-label="Zoom in" className="shrink-0">
          <svg viewBox="0 0 8 8" className="h-2 w-2" fill="none" aria-hidden="true">
            <path d="M0 4H8M4 0V8" stroke="#8a8a8a" strokeWidth="2" />
          </svg>
        </button>
      </Cell>
      <span className="w-[51px] shrink-0 pl-[6px]">100%</span>
    </footer>
  );
}

export default function App() {
  return (
    <div className="relative flex h-screen flex-col overflow-hidden bg-[#e0dfde] font-['DejaVu_Sans_Condensed','DejaVu_Sans',sans-serif] text-[13px] text-[#1a1a1a]">
      <div className="shrink-0 border-b border-[#a09f9e] bg-gradient-to-b from-[#eeeeed] via-[#e4e3e2] to-[#dfdedd]">
        <MenuBar />
        <StandardBar />
        <FormattingBar />
      </div>
      <main className="flex min-h-0 flex-1">
        <Document />
        <div className="flex w-[7px] shrink-0 items-center border-x border-[#a3a2a1] bg-[#ececeb]">
          <button type="button" aria-label="Hide sidebar" className="flex h-[73px] w-full items-center justify-center bg-[#777]">
            <svg viewBox="0 0 5 8" className="h-2 w-[5px]" aria-hidden="true">
              <path d="M0 0L5 4L0 8Z" fill="#e8e8e8" />
            </svg>
          </button>
        </div>
        <StylesPanel />
        <DeckTabs />
      </main>
      <StatusBar />
      {/* mouse pointer */}
      <svg viewBox="0 0 18 24" className="pointer-events-none absolute left-[459px] top-px h-6 w-[18px]" aria-hidden="true">
        <path d="M1 1L17 14L14 23L5 21Z" fill="#f23535" stroke="#111" strokeLinejoin="round" />
      </svg>
    </div>
  );
}
